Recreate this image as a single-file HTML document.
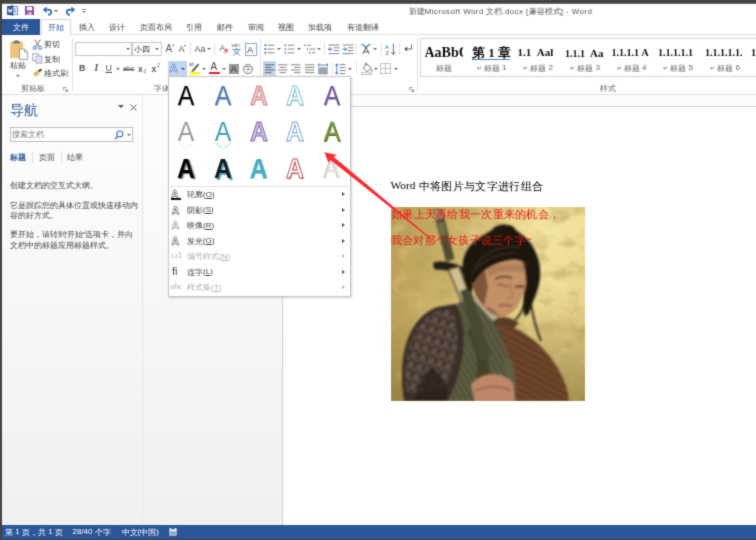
<!DOCTYPE html>
<html lang="zh"><head><meta charset="utf-8"><title>Word</title>
<style>
html,body{margin:0;padding:0}html{overflow:hidden;width:756px;height:540px}
body{width:756px;height:540px;overflow:hidden;position:relative;background:#444;font-family:"Liberation Sans",sans-serif;font-size:8px;color:#444}
#w{position:absolute;left:0;top:0;width:756px;height:540px;overflow:hidden;filter:url(#soft)}
#w div,#w svg,#w b.p,#w i.p{position:absolute}
.t{line-height:1;white-space:nowrap}
.c{display:inline-block;letter-spacing:0;position:relative;top:0.5px;line-height:1;white-space:nowrap;text-align:justify;text-align-last:justify;vertical-align:baseline}
.c1{width:1em}.c2{width:2em}.c3{width:3em}.c4{width:4em}.c5{width:5em}.c6{width:6em}.c7{width:7em}.c8{width:8em}.c9{width:9em}.c10{width:10em}.c11{width:11em}.c12{width:12em}.c13{width:13em}.c14{width:14em}.c15{width:15em}.c16{width:16em}
.se{font-family:"Liberation Serif",serif}
.sep{width:1px;background:#e1e1e1}
.ar{width:0;height:0;border-left:2px solid transparent;border-right:2px solid transparent;border-top:2px solid #666}
.ra{width:0;height:0;border-top:2.5px solid transparent;border-bottom:2.5px solid transparent;border-left:3px solid #555}
.A{font-size:27.5px;line-height:28px;width:36px;text-align:center;font-weight:400}
</style></head><body>
<svg width="0" height="0" style="position:absolute"><filter id="soft" x="0" y="0" width="100%" height="100%" color-interpolation-filters="sRGB"><feConvolveMatrix order="3" kernelMatrix="0.0225 0.105 0.0225 0.105 0.49 0.105 0.0225 0.105 0.0225" divisor="1" edgeMode="duplicate" preserveAlpha="false"/></filter></svg>
<div id="w">
<div style="left:0;top:3px;width:756px;height:1px;background:#3a3a3a"></div><div style="left:2px;top:3px;width:754px;height:1px;background:#6a6a6a"></div>
<div style="left:2px;top:4px;width:754px;height:535px;background:#fff"></div>
<div style="left:0;top:539px;width:756px;height:1px;background:#444"></div>
<!-- title bar / quick access -->
<svg style="left:6px;top:5px" width="13" height="11" viewBox="0 0 13 11">
<rect x="6" y="1.5" width="5.5" height="8" fill="#fff" stroke="#6e8fc2" stroke-width="1"/>
<rect x="7.2" y="3" width="3" height="5" fill="#a9bfe0"/>
<path d="M1 1.3 L7.3 0.2 V10.8 L1 9.7 Z" fill="#2b579a"/>
<path d="M2.3 3.6 L3.1 7.4 L4.1 4.6 L5.1 7.4 L5.9 3.6" fill="none" stroke="#fff" stroke-width="0.9"/>
</svg>
<svg style="left:25px;top:6px" width="9" height="9" viewBox="0 0 9 9">
<rect width="9" height="9" rx="0.6" fill="#9247b0"/>
<rect x="1.8" y="0.8" width="5.4" height="3.6" fill="#fff"/>
<rect x="2.4" y="6.2" width="4.2" height="2.8" fill="#e9d8f0"/>
<rect x="3" y="6.8" width="1.2" height="1.6" fill="#9247b0"/>
</svg>
<svg style="left:41.5px;top:6px" width="11" height="10" viewBox="0 0 11 10"><path d="M0.6 3.8 L4.6 0.6 V7 Z" fill="#3a74b8"/><path d="M4 3.8 H6.4 C10 3.8 10.4 7.4 6.2 9.2" fill="none" stroke="#3a74b8" stroke-width="1.9"/></svg>
<div class="ar" style="left:54px;top:9.5px;border-top-color:#555"></div>
<svg style="left:64.5px;top:6px" width="11" height="10" viewBox="0 0 11 10"><path d="M10.4 3.8 L6.4 0.6 V7 Z" fill="#3a74b8"/><path d="M7 3.8 H4.6 C1 3.8 0.6 7.4 4.8 9.2" fill="none" stroke="#3a74b8" stroke-width="1.9"/></svg>
<div style="left:82px;top:9px;width:4px;height:1px;background:#888"></div>
<div class="ar" style="left:82px;top:11px;border-top-color:#888"></div>
<div class="t" style="left:408.5px;top:7.5px;font-size:8px;color:#555;letter-spacing:0.4px"><span class="c c2">新建</span>Microsoft Word <span class="c c2">文档</span>.docx [<span class="c c4">兼容模式</span>] - Word</div>
<!-- ribbon tabs -->
<div style="left:2px;top:34px;width:754px;height:1px;background:#e1e1e1"></div>
<div style="left:2px;top:19px;width:38px;height:16px;background:#2b579a"></div>
<div class="t" style="left:13px;top:23px;font-size:8px;color:#fff"><span class="c c2">文件</span></div>
<div style="left:41px;top:19px;width:30px;height:16px;background:#fff;border:1px solid #d6d6d6;border-bottom:none;box-sizing:border-box"></div>
<div class="t" style="left:47.5px;top:23px;color:#2b579a"><span class="c c2">开始</span></div>
<div class="t" style="left:79px;top:23px"><span class="c c2">插入</span></div>
<div class="t" style="left:109px;top:23px"><span class="c c2">设计</span></div>
<div class="t" style="left:140px;top:23px"><span class="c c4">页面布局</span></div>
<div class="t" style="left:186px;top:23px"><span class="c c2">引用</span></div>
<div class="t" style="left:217px;top:23px"><span class="c c2">邮件</span></div>
<div class="t" style="left:248px;top:23px"><span class="c c2">审阅</span></div>
<div class="t" style="left:278px;top:23px"><span class="c c2">视图</span></div>
<div class="t" style="left:308px;top:23px"><span class="c c3">加载项</span></div>
<div class="t" style="left:347px;top:23px"><span class="c c4">有道翻译</span></div>
<!-- ribbon: clipboard -->
<div style="left:2px;top:93.5px;width:754px;height:1px;background:#dedede"></div>
<svg style="left:9px;top:40px" width="20" height="22" viewBox="0 0 20 22">
<rect x="1" y="1.8" width="13" height="16.5" rx="0.8" fill="#ecc57a"/>
<rect x="4" y="1" width="7" height="2.4" rx="0.8" fill="#777"/>
<rect x="6" y="0" width="3" height="1.8" rx="0.9" fill="#888"/>
<path d="M10.5 9 H15.5 L18.5 12 V19.5 H10.5 Z" fill="#fff" stroke="#8a8a8a" stroke-width="0.8"/>
<path d="M15.5 9 V12 H18.5" fill="none" stroke="#8a8a8a" stroke-width="0.8"/>
</svg>
<div class="t" style="left:10px;top:61.3px"><span class="c c2">粘贴</span></div>
<div class="ar" style="left:16px;top:75px"></div>
<svg style="left:32px;top:39px" width="11" height="11" viewBox="0 0 11 11">
<path d="M2.6 0.6 L7.2 7.6 M8.4 0.6 L3.8 7.6" stroke="#666" stroke-width="1" fill="none"/>
<circle cx="2.8" cy="8.8" r="1.6" fill="none" stroke="#3a74b8" stroke-width="1"/>
<circle cx="8.2" cy="8.8" r="1.6" fill="none" stroke="#3a74b8" stroke-width="1"/>
</svg>
<div class="t" style="left:44px;top:40.5px"><span class="c c2">剪切</span></div>
<svg style="left:32px;top:53px" width="11" height="11" viewBox="0 0 11 11">
<rect x="0.8" y="0.8" width="5.6" height="7" fill="#fff" stroke="#7f8fa8" stroke-width="0.8"/>
<rect x="4" y="3.2" width="5.8" height="7" fill="#fff" stroke="#7f8fa8" stroke-width="0.8"/>
<path d="M5.2 5.4 H8.6 M5.2 7 H8.6 M5.2 8.6 H8.6" stroke="#9fb3d1" stroke-width="0.7"/>
</svg>
<div class="t" style="left:44px;top:55px"><span class="c c2">复制</span></div>
<svg style="left:32px;top:68px" width="11" height="10" viewBox="0 0 11 10">
<path d="M1 5.6 L5.2 2.6 L7.6 5.4 L3.6 8.8 Z" fill="#e8b65a"/>
<path d="M5.6 2.4 L8.8 0.4 L10.2 2 L7.4 4.6 Z" fill="#555"/>
</svg>
<div class="t" style="left:44px;top:69.3px"><span class="c c3">格式刷</span></div>
<div class="t" style="left:21px;top:84px;color:#666"><span class="c c3">剪贴板</span></div>
<svg style="left:63px;top:86.5px" width="5" height="5" viewBox="0 0 5 5"><path d="M0.5 3.5 V0.5 H3.5" fill="none" stroke="#888" stroke-width="0.8"/><path d="M2 2 L4.5 4.5 M4.5 2.4 V4.5 H2.4" fill="none" stroke="#777" stroke-width="0.8"/></svg>
<div class="sep" style="left:72px;top:38px;height:53px"></div>
<!-- font group row1 -->
<div style="left:75px;top:42px;width:57px;height:14px;border:1px solid #c6c6c6;box-sizing:border-box;background:#fff"></div>
<div class="ar" style="left:126px;top:48px"></div>
<div style="left:131.5px;top:42px;width:30px;height:14px;border:1px solid #c6c6c6;box-sizing:border-box;background:#fff"></div>
<div class="t" style="left:134px;top:45px;color:#333"><span class="c c2">小四</span></div>
<div class="ar" style="left:155px;top:48px"></div>
<div class="t" style="left:165.5px;top:44px;font-size:10px;color:#555">A</div><div class="ar" style="left:171.5px;top:44px;border-top:none;border-bottom:2px solid #3a74b8;border-left-width:1.5px;border-right-width:1.5px"></div>
<div class="t" style="left:178.5px;top:45px;font-size:9px;color:#555">A</div><div class="ar" style="left:184px;top:44.5px;border-top-color:#3a74b8;border-left-width:1.5px;border-right-width:1.5px"></div>
<div class="sep" style="left:189.5px;top:43px;height:12px"></div>
<div class="t" style="left:194.5px;top:44.5px;font-size:9px;color:#555">Aa</div><div class="ar" style="left:206.5px;top:48px"></div>
<div class="sep" style="left:214px;top:43px;height:12px"></div>
<svg style="left:219px;top:43px" width="11" height="12" viewBox="0 0 11 12">
<text x="0.5" y="8" font-family="Liberation Sans" font-size="8.5" fill="#555">A</text>
<path d="M4.2 8.6 L7.4 5 L9.8 7.2 L6.6 10.8 Z" fill="#e8798f"/><path d="M4.2 8.6 L5.4 7.3 L7.8 9.5 L6.6 10.8 Z" fill="#f4b7c2"/>
</svg>
<svg style="left:231px;top:42.5px" width="11" height="13" viewBox="0 0 11 13"><text x="0.4" y="4" font-family="Liberation Sans" font-size="4.6" fill="#666">wén</text><path d="M5.5 4.8 V6.4 M1.4 6.6 H9.6 M3 7.6 L8.6 12.4 M8.2 7.6 L2.4 12.4" stroke="#3a74b8" stroke-width="0.9" fill="none"/></svg>
<div style="left:244.5px;top:43px;width:12px;height:12.5px;border:1px solid #86a8d6;box-sizing:border-box"></div>
<div class="t" style="left:247px;top:44.5px;font-size:9.5px;color:#444">A</div>
<!-- font group row2 -->
<div class="t" style="left:79px;top:64px;font-size:9px;font-weight:700;color:#555">B</div>
<div class="t se" style="left:94.5px;top:64px;font-size:9.5px;font-weight:700;font-style:italic;color:#555">I</div>
<div class="t" style="left:105.5px;top:64px;font-size:9px;color:#555;text-decoration:underline">U</div>
<div class="ar" style="left:116px;top:68px"></div>
<div class="t" style="left:123px;top:65px;font-size:7px;color:#555;text-decoration:line-through">abc</div>
<div class="t" style="left:138px;top:64.5px;font-size:8.5px;font-weight:700;color:#555">x</div><div class="t" style="left:143.5px;top:68.5px;font-size:5px;color:#3a74b8">2</div>
<div class="t" style="left:151.5px;top:64.5px;font-size:8.5px;font-weight:700;color:#555">x</div><div class="t" style="left:157px;top:62.5px;font-size:5px;color:#3a74b8">2</div>
<div style="left:167.5px;top:60.5px;width:19.5px;height:15.5px;background:#c2d5f2"></div>
<div class="t" style="left:169.5px;top:62.5px;font-size:11.5px;font-weight:700;color:#d9e6f8;-webkit-text-stroke:0.55px #3a74b8">A</div>
<div class="ar" style="left:181px;top:67.5px;border-top-color:#444"></div>
<svg style="left:188.5px;top:61px" width="12" height="14" viewBox="0 0 12 14">
<text x="0" y="5" font-family="Liberation Sans" font-size="4.5" fill="#555">ab</text>
<path d="M3 9.2 L8.8 2.4 L10.4 3.8 L4.8 10.4 L2.4 10.8 Z" fill="#666"/>
<rect x="0.5" y="11" width="10.5" height="2.6" fill="#ffff00"/>
</svg>
<div class="ar" style="left:202px;top:67.5px"></div>
<div class="t" style="left:210.5px;top:62px;font-size:10px;color:#444">A</div>
<div style="left:209px;top:71.5px;width:10.5px;height:2.6px;background:#e8202a"></div>
<div class="ar" style="left:221.5px;top:67.5px"></div>
<div style="left:229px;top:63.5px;width:9.5px;height:10.5px;background:#9a9a9a"></div>
<div class="t" style="left:230.5px;top:64px;font-size:9.5px;color:#333">A</div>
<div style="left:243px;top:63.5px;width:10px;height:10px;border:0.8px solid #777;border-radius:50%;box-sizing:border-box"></div>
<div class="t" style="left:245px;top:65.3px;font-size:6px;color:#666"><span class="c c1">字</span></div>
<div class="t" style="left:153.5px;top:84px;color:#666"><span class="c c2">字体</span></div>
<div class="sep" style="left:260px;top:38px;height:53px"></div>
<!-- paragraph group row1 -->
<svg style="left:263.5px;top:43px" width="11" height="12" viewBox="0 0 11 12">
<path d="M3.6 2.2 H10.4 M3.6 6 H10.4 M3.6 9.8 H10.4" stroke="#777" stroke-width="0.9"/>
<rect x="0.4" y="1.3" width="1.8" height="1.8" fill="#3a74b8"/><rect x="0.4" y="5.1" width="1.8" height="1.8" fill="#3a74b8"/><rect x="0.4" y="8.9" width="1.8" height="1.8" fill="#3a74b8"/>
</svg>
<div class="ar" style="left:276.5px;top:48px"></div>
<svg style="left:284px;top:43px" width="11" height="12" viewBox="0 0 11 12">
<path d="M3.6 2.2 H10.4 M3.6 6 H10.4 M3.6 9.8 H10.4" stroke="#777" stroke-width="0.9"/>
<path d="M1.2 1 V3.4 M1.2 4.8 V7.2 M1.2 8.6 V11" stroke="#3a74b8" stroke-width="0.9"/>
</svg>
<div class="ar" style="left:296.5px;top:48px"></div>
<svg style="left:304px;top:43px" width="12" height="12" viewBox="0 0 12 12">
<path d="M3 2.2 H7 M5.6 6 H11.4 M7.6 9.8 H11.4" stroke="#777" stroke-width="0.9"/>
<path d="M0.8 1 V3.4 M3.4 4.8 V7.2 M5.6 8.6 V11" stroke="#3a74b8" stroke-width="0.9"/>
</svg>
<div class="ar" style="left:316.5px;top:48px"></div>
<div class="sep" style="left:324px;top:43px;height:12px"></div>
<svg style="left:327.5px;top:43.5px" width="12" height="11" viewBox="0 0 12 11">
<path d="M0.5 1 H11.5 M6 3.8 H11.5 M6 6.6 H11.5 M0.5 9.6 H11.5" stroke="#777" stroke-width="0.9"/>
<path d="M4.6 5.2 H0.8 M2.4 3.4 L0.6 5.2 L2.4 7" stroke="#3a74b8" stroke-width="1" fill="none"/>
</svg>
<svg style="left:341.5px;top:43.5px" width="12" height="11" viewBox="0 0 12 11">
<path d="M0.5 1 H11.5 M6 3.8 H11.5 M6 6.6 H11.5 M0.5 9.6 H11.5" stroke="#777" stroke-width="0.9"/>
<path d="M0.6 5.2 H4.4 M2.8 3.4 L4.6 5.2 L2.8 7" stroke="#3a74b8" stroke-width="1" fill="none"/>
</svg>
<div class="sep" style="left:356px;top:43px;height:12px"></div>
<svg style="left:360px;top:43px" width="12" height="12" viewBox="0 0 12 12">
<path d="M1 0.8 L6 5 L11 0.8 M3 1 L6 4 L9 1" stroke="#3a74b8" stroke-width="0.9" fill="none"/>
<path d="M2.6 11 L6 4.6 L9.4 11 M3.8 8.8 H8.2" stroke="#555" stroke-width="1" fill="none"/>
</svg>
<div class="ar" style="left:372.5px;top:48px"></div>
<div class="sep" style="left:380.5px;top:43px;height:12px"></div>
<svg style="left:384.5px;top:42.5px" width="12" height="13" viewBox="0 0 12 13">
<text x="0" y="5.6" font-family="Liberation Sans" font-size="6.2" fill="#3a74b8">A</text>
<text x="0.2" y="12.4" font-family="Liberation Sans" font-size="6.2" fill="#8e5bb0">Z</text>
<path d="M8.4 0.6 V11.2 M6.4 9 L8.4 11.6 L10.4 9" stroke="#666" stroke-width="0.9" fill="none"/>
</svg>
<div class="sep" style="left:399px;top:43px;height:12px"></div>
<svg style="left:402.5px;top:44px" width="10" height="9" viewBox="0 0 10 9">
<path d="M8.6 0.6 V5 H2" stroke="#666" stroke-width="1" fill="none"/><path d="M4.2 2.6 L1.2 5 L4.2 7.4 Z" fill="#555"/>
</svg>
<!-- paragraph group row2 -->
<div style="left:262.5px;top:60.5px;width:13px;height:15.5px;background:#c2d5f2"></div>
<svg style="left:264.5px;top:63.5px" width="10" height="10" viewBox="0 0 10 10"><path d="M0 0.8 H9.4 M0 3.4 H6.4 M0 6 H9.4 M0 8.6 H6.4" stroke="#555" stroke-width="0.9"/></svg>
<svg style="left:277.5px;top:63.5px" width="10" height="10" viewBox="0 0 10 10"><path d="M0 0.8 H9.4 M1.6 3.4 H7.8 M0 6 H9.4 M1.6 8.6 H7.8" stroke="#777" stroke-width="0.9"/></svg>
<svg style="left:291px;top:63.5px" width="10" height="10" viewBox="0 0 10 10"><path d="M0 0.8 H9.4 M3 3.4 H9.4 M0 6 H9.4 M3 8.6 H9.4" stroke="#777" stroke-width="0.9"/></svg>
<svg style="left:305px;top:63.5px" width="10" height="10" viewBox="0 0 10 10"><path d="M0 0.8 H9.4 M0 3.4 H9.4 M0 6 H9.4 M0 8.6 H9.4" stroke="#777" stroke-width="0.9"/></svg>
<svg style="left:318px;top:62.5px" width="10" height="12" viewBox="0 0 10 12">
<path d="M0.5 0.6 V3.4 M9.5 0.6 V3.4 M0.5 2 H9.5" stroke="#3a74b8" stroke-width="0.9" fill="none"/>
<rect x="0.4" y="4.4" width="9.2" height="7" fill="#8a93a0"/><path d="M1.4 6 H8.6 M1.4 8 H8.6 M1.4 10 H8.6" stroke="#cfd5de" stroke-width="0.6"/>
</svg>
<div class="sep" style="left:331.5px;top:62px;height:12px"></div>
<svg style="left:335px;top:62.5px" width="11" height="12" viewBox="0 0 11 12">
<path d="M4.6 1.6 H10.6 M4.6 4.6 H10.6 M4.6 7.6 H10.6 M4.6 10.6 H10.6" stroke="#777" stroke-width="0.9"/>
<path d="M1.8 1 V11 M0.4 2.8 L1.8 0.8 L3.2 2.8 M0.4 9.2 L1.8 11.2 L3.2 9.2" stroke="#3a74b8" stroke-width="0.9" fill="none"/>
</svg>
<div class="ar" style="left:348px;top:67.5px"></div>
<div class="sep" style="left:356px;top:62px;height:12px"></div>
<svg style="left:359.5px;top:62px" width="13" height="13" viewBox="0 0 13 13">
<path d="M3.2 5.8 L7 2 L11 6 L7.2 9.8 Z" fill="#fff" stroke="#666" stroke-width="0.9"/>
<path d="M7 2 C5.4 0.4 4.2 1.6 5.4 3.4" fill="none" stroke="#666" stroke-width="0.8"/>
<path d="M11.6 7 C12.6 8.6 12.4 9.6 11.6 9.6 C10.8 9.6 10.6 8.6 11.6 7Z" fill="#666"/>
<rect x="1.4" y="10.8" width="10.4" height="1.8" fill="#fff" stroke="#999" stroke-width="0.6"/>
</svg>
<div class="ar" style="left:373.5px;top:67.5px"></div>
<svg style="left:379.5px;top:62.5px" width="11" height="11" viewBox="0 0 11 11">
<rect x="0.5" y="0.5" width="10" height="10" fill="none" stroke="#bbb" stroke-width="0.9"/><path d="M5.5 0.5 V10.5 M0.5 5.5 H10.5" stroke="#bbb" stroke-width="0.9"/>
</svg>
<div class="ar" style="left:393.5px;top:67.5px"></div>
<svg style="left:409px;top:86.5px" width="5" height="5" viewBox="0 0 5 5"><path d="M0.5 3.5 V0.5 H3.5" fill="none" stroke="#888" stroke-width="0.8"/><path d="M2 2 L4.5 4.5 M4.5 2.4 V4.5 H2.4" fill="none" stroke="#777" stroke-width="0.8"/></svg>
<div class="sep" style="left:417px;top:38px;height:53px"></div>
<!-- styles gallery -->
<div style="left:420px;top:38px;width:340px;height:39px;border:1px solid #d6d6d6;box-sizing:border-box;background:#fff"></div>
<div class="t se" style="left:424.5px;top:46px;font-size:14px;font-weight:700;color:#111;width:38.5px;overflow:hidden">AaBbCc</div>
<div class="t" style="left:436px;top:64px;color:#666"><span class="c c2">标题</span></div>
<div class="t" style="left:471.5px;top:45.5px;font-size:13px;font-weight:700;color:#111;width:38px;border-bottom:1px solid #4f81bd;padding-bottom:0.5px"><span class="c c1">第</span> <span class="se">1</span> <span class="c c1">章</span></div>
<div class="t" style="left:476.5px;top:64px;color:#666"><span style="font-size:6px">↵</span> <span class="c c2">标题</span> 1</div>
<div class="t se" style="left:517.5px;top:47px;font-size:11px;font-weight:700;color:#111;width:39px;overflow:hidden">1.1&nbsp;&nbsp;<span style="font-size:11px">Aal</span></div>
<div class="t" style="left:523px;top:64px;color:#666"><span style="font-size:6px">↵</span> <span class="c c2">标题</span> 2</div>
<div class="t se" style="left:565px;top:48px;font-size:10px;font-weight:700;color:#111">1.1.1&nbsp;&nbsp;<span style="font-size:11px">Aa</span></div>
<div class="t" style="left:570px;top:64px;color:#666"><span style="font-size:6px">↵</span> <span class="c c2">标题</span> 3</div>
<div class="t se" style="left:611.5px;top:48px;font-size:10px;font-weight:700;color:#111">1.1.1.1&nbsp;<span style="font-size:10px">A</span></div>
<div class="t" style="left:616.5px;top:64px;color:#666"><span style="font-size:6px">↵</span> <span class="c c2">标题</span> 4</div>
<div class="t se" style="left:658px;top:48px;font-size:10px;font-weight:700;color:#111">1.1.1.1.1</div>
<div class="t" style="left:663px;top:64px;color:#666"><span style="font-size:6px">↵</span> <span class="c c2">标题</span> 5</div>
<div class="t se" style="left:705px;top:48px;font-size:10px;font-weight:700;color:#111">1.1.1.1.1.</div>
<div class="t" style="left:710px;top:64px;color:#666"><span style="font-size:6px">↵</span> <span class="c c2">标题</span> 6</div>
<div class="t se" style="left:751px;top:48px;font-size:10px;font-weight:700;color:#111">1.</div>
<div class="t" style="left:599.5px;top:84px;color:#666"><span class="c c2">样式</span></div>
<!-- workspace + nav pane background -->
<div style="left:2px;top:94.5px;width:754px;height:431px;background:linear-gradient(#fdfdfd,#f0f0f0)"></div>
<div style="left:142px;top:95px;width:1px;height:430px;background:#e6e6e6"></div>
<!-- page -->
<div style="left:282px;top:106px;width:476px;height:420px;background:#fff;border:1px solid #d2d2d2;box-sizing:border-box"></div>
<!-- navigation pane -->
<div class="t" style="left:10px;top:102.5px;font-size:14px;color:#2b579a"><span class="c c2">导航</span></div>
<div class="ar" style="left:118px;top:105px;border-left-width:3px;border-right-width:3px;border-top:3.5px solid #555"></div>
<svg style="left:130px;top:103.5px" width="7" height="7" viewBox="0 0 7 7"><path d="M0.6 0.6 L6.4 6.4 M6.4 0.6 L0.6 6.4" stroke="#555" stroke-width="1"/></svg>
<div style="left:9.5px;top:127px;width:123px;height:15px;border:1px solid #bdbdbd;box-sizing:border-box;background:#fff"></div>
<div class="t" style="left:11.5px;top:130.5px;color:#777"><span class="c c4">搜索文档</span></div>
<svg style="left:113.5px;top:129.5px" width="10" height="10" viewBox="0 0 10 10"><circle cx="5.8" cy="4" r="3" fill="none" stroke="#3a74b8" stroke-width="1.1"/><path d="M3.8 6.2 L0.8 9.2" stroke="#3a74b8" stroke-width="1.3"/></svg>
<div class="ar" style="left:126.5px;top:134px"></div>
<div class="t" style="left:10px;top:153px;color:#2b579a;font-weight:700"><span class="c c2">标题</span></div>
<div class="sep" style="left:31.5px;top:151px;height:12px"></div>
<div class="t" style="left:38.5px;top:153px"><span class="c c2">页面</span></div>
<div class="sep" style="left:60.5px;top:151px;height:12px"></div>
<div class="t" style="left:66.5px;top:153px"><span class="c c2">结果</span></div>
<div class="t" style="left:10px;top:181px;font-size:7.8px"><span class="c c11">创建文档的交互式大纲。</span></div>
<div class="t" style="left:10px;top:201px;font-size:7.8px"><span class="c c16">它是跟踪您的具体位置或快速移动内</span></div>
<div class="t" style="left:10px;top:211.3px;font-size:7.8px"><span class="c c6">容的好方式。</span></div>
<div class="t" style="left:10px;top:230.8px;font-size:7.8px"><span class="c c7">要开始，请转到</span>“<span class="c c2">开始</span>”<span class="c c6">选项卡，并向</span></div>
<div class="t" style="left:10px;top:241.1px;font-size:7.8px"><span class="c c13">文档中的标题应用标题样式。</span></div>
<!-- document text -->
<div class="t" style="left:390.5px;top:180px;font-size:11px;color:#000"><span class="se" style="font-size:11.4px">Word</span> <span class="c" style="width:124.5px">中将图片与文字进行组合</span></div>
<!--PHOTO-->
<svg style="left:390.5px;top:207px" width="194" height="194" viewBox="0 0 194 194">
<defs>
<linearGradient id="bg" x1="0" y1="0" x2="1" y2="0.3"><stop offset="0" stop-color="#b89c50"/><stop offset="0.4" stop-color="#cfb66e"/><stop offset="0.75" stop-color="#ead68c"/><stop offset="1" stop-color="#e6d088"/></linearGradient>
<linearGradient id="dk" x1="0" y1="0" x2="0" y2="1"><stop offset="0.5" stop-color="#6e5a22" stop-opacity="0"/><stop offset="1" stop-color="#6e5a22" stop-opacity="0.55"/></linearGradient>
<radialGradient id="hl" cx="0.86" cy="0.12" r="0.5"><stop offset="0" stop-color="#f6e7a4" stop-opacity="0.8"/><stop offset="1" stop-color="#f6e7a4" stop-opacity="0"/></radialGradient>
<filter id="bl" x="-10%" y="-10%" width="120%" height="120%"><feGaussianBlur stdDeviation="0.9"/></filter>
<filter id="bl2" x="-10%" y="-10%" width="120%" height="120%"><feGaussianBlur stdDeviation="3"/></filter>
<filter id="nz" x="0" y="0" width="100%" height="100%"><feTurbulence type="fractalNoise" baseFrequency="0.045 0.07" numOctaves="3" seed="7"/><feColorMatrix type="matrix" values="0 0 0 0 0.42  0 0 0 0 0.33  0 0 0 0 0.1  0 0 0 -2.4 1.35"/></filter>
<filter id="nz2" x="0" y="0" width="100%" height="100%"><feTurbulence type="fractalNoise" baseFrequency="0.05 0.06" numOctaves="2" seed="3"/><feColorMatrix type="matrix" values="0 0 0 0 1  0 0 0 0 0.95  0 0 0 0 0.7  0 0 0 2.2 -1.25"/></filter>
<pattern id="sc" width="9" height="10" patternUnits="userSpaceOnUse" patternTransform="rotate(18)"><ellipse cx="4.5" cy="4" rx="3" ry="3.8" fill="#7a695c"/><ellipse cx="0" cy="9" rx="3" ry="3.8" fill="#66574b"/><ellipse cx="9" cy="9" rx="3" ry="3.8" fill="#66574b"/></pattern>
<pattern id="st" width="5" height="40" patternUnits="userSpaceOnUse" patternTransform="rotate(-28)"><rect width="2" height="40" fill="#3e3d28"/></pattern>
<pattern id="st2" width="6" height="40" patternUnits="userSpaceOnUse" patternTransform="rotate(-62)"><rect width="2.2" height="40" fill="#4e2c1a"/></pattern>
<clipPath id="cp"><rect width="194" height="194"/></clipPath>
</defs>
<g clip-path="url(#cp)">
<rect width="194" height="194" fill="url(#bg)"/>
<rect width="194" height="194" fill="url(#hl)"/>
<rect width="194" height="194" fill="url(#dk)"/>
<rect width="194" height="194" filter="url(#nz)" opacity="0.55"/>
<rect width="194" height="194" filter="url(#nz2)" opacity="0.35"/>
<g filter="url(#bl)">
<!-- sword -->
<path d="M42.5 4.5 C43 0.5 51 0 51.5 4 L63.5 52 L55 55 Z" fill="#4f4c30"/>
<path d="M43.5 4 C44 1.5 50 1 50.5 4 L52 11 L45 12.5 Z" fill="#9a946c"/>
<path d="M47 16 L52 15 L55 28 L50 29 Z" fill="#77734e"/>
<path d="M42 56 C52 52 66 57 76 62 L73.5 67 C64 64 52 63 43 62 Z" fill="#231f16"/>
<path d="M56.5 62 L69 59 L84 99 L73 103 Z" fill="#4a4330"/>
<path d="M58.5 63 L67.5 60.5 L81 98 L74 101 Z" fill="#d2bf94"/>
<!-- torso -->
<path d="M62 98 L84 90 L112 120 L124 194 L52 194 C72 160 74 128 62 98 Z" fill="#5f5e42"/>
<path d="M62 98 L84 90 L112 120 L124 194 L52 194 C72 160 74 128 62 98 Z" fill="url(#st)" opacity="0.55"/>
<path d="M80 120 C92 130 100 150 98 175 L84 180 C88 160 86 140 76 126 Z" fill="#45432c"/>
<path d="M69 84 L79 80 L100 148 L90 154 Z" fill="#4a4830"/>
<!-- armor shoulder -->
<path d="M13 194 C6 150 16 112 46 100 L64 97 C80 120 72 168 56 194 Z" fill="#3a2e25"/>
<path d="M16 186 C10 150 20 116 46 104 L60 102 C72 122 66 160 52 184 Z" fill="url(#sc)" opacity="0.62"/>
<path d="M40 160 C52 168 58 180 56 194 L24 194 C26 180 32 168 40 160 Z" fill="#2a2119" opacity="0.8"/>
<!-- right arm -->
<path d="M104 116 C120 116 140 128 154 144 C167 158 177 178 178 194 L114 194 C124 170 118 140 104 116 Z" fill="#70462b"/>
<path d="M104 116 C120 116 140 128 154 144 C167 158 177 178 178 194 L114 194 C124 170 118 140 104 116 Z" fill="url(#st2)" opacity="0.5"/>
<path d="M104 112 C112 108 120 110 128 116 L122 122 C116 118 110 116 104 118 Z" fill="#5a3a26"/>
<path d="M112 150 C116 164 116 180 112 194 L124 194 C126 178 124 164 120 152 Z" fill="#5d6044"/>
<!-- neck / collar -->
<path d="M82 92 L102 114 L112 104 L96 84 Z" fill="#b9b094"/>
<path d="M88 84 L108 110 L118 104 L100 84 Z" fill="#8e6446"/>
<!-- hair back -->
<path d="M100.6 23.5 C104 16 122 15 125 23.5 C132 28 140 34 144 44 C150 56 151 70 146 84 C143 94 138 104 134 110 C130 100 134 80 134 60 L122 52 L107 57 L94 64 L83 76 L80 86 C74 80 71 66 72 54 C74 44 80 36 87 32 C92 28 96 26 100.6 23.5 Z" fill="#1b1510"/>
<!-- face -->
<path d="M81 75 C84 70 90 65 94 63.5 C100 58 112 54 123 52.5 L134 55 C136 64 136 74 134 82 C131 92 127 100 122.5 104 C118 108 113 110.5 109 110 C101 108 93 102 89.5 97 C85 90 82 82 81 75 Z" fill="#c39166"/>
<path d="M81 75 C84 70 90 65 94 63.5 L97 80 L93 99 C86 92 82 84 81 75 Z" fill="#7e553a"/><path d="M93 99 C100 100 106 104 109 110 C101 108 96 104 93 99 Z" fill="#9a6a4a"/><path d="M96 62 C106 58 118 56 132 58 L133 66 C120 62 108 64 98 70 Z" fill="#a87a56" opacity="0.8"/>
<path d="M104 72 C110 69 116 69 121 71 M124 80 C128 79 131 79 133 80" stroke="#3a2418" stroke-width="1.8" fill="none"/>
<path d="M106 78 C110 77 114 78 117 80" stroke="#5a3826" stroke-width="1.2" fill="none"/>
<path d="M119 76 L122 90 L116 92" stroke="#a87452" stroke-width="1.4" fill="none"/>
<path d="M108 99 C112 97.5 117 98 121 99" stroke="#9a5848" stroke-width="2" fill="none"/>
<path d="M84 60 C92 46 108 38 128 40 M80 68 C90 54 104 46 124 46" stroke="#4a3826" stroke-width="1.6" fill="none" opacity="0.7"/>
<!-- hair front strands -->
<path d="M83 76 C88 66 98 58 110 55 C118 53 128 52 134 55 C124 50 108 50 96 56 C88 60 82 68 80 76 Z" fill="#1b1510"/>
<path d="M132 54 C137 66 137 84 133 98 C131 104 128 110 124 113 M138 50 C146 70 142 96 136 108 M140 96 C142 112 146 124 150 134" stroke="#1f1812" stroke-width="1.8" fill="none"/>
<!-- hands -->
<path d="M80 178 C90 164 112 164 122 176 L124 194 L84 194 Z" fill="#bd8768"/>
<path d="M84 184 C96 178 110 178 120 184" stroke="#8d5a44" stroke-width="1.5" fill="none"/>
</g>
</g>
</svg>
<div class="t" style="left:391px;top:208px;font-size:11px;color:#f01818"><span class="c" style="width:169px">如果上天再给我一次重来的机会，</span></div>
<div class="t" style="left:391px;top:234.3px;font-size:11px;color:#f01818"><span class="c" style="width:134.5px">我会对那个女孩子说三个字</span>~</div>
<!-- text effects dropdown -->
<div style="left:167.5px;top:76px;width:183.5px;height:220.5px;background:#fff;border:1px solid #c6c6c6;box-sizing:border-box;box-shadow:1px 1px 2px rgba(0,0,0,0.18)"></div>
<div class="A" style="left:168px;top:82.3px;transform:scaleX(0.9);color:#000;text-shadow:0.5px 0.8px 1px #999">A</div>
<div class="A" style="left:204.5px;top:82.3px;transform:scaleX(0.9);color:#4a7ebb;text-shadow:0.5px 1px 1px #aab">A</div>
<div class="A" style="left:240.5px;top:82.3px;transform:scaleX(0.9);font-weight:700;color:#efc1c1;-webkit-text-stroke:0.9px #cf8a8a">A</div>
<div class="A" style="left:277px;top:82.3px;transform:scaleX(0.9);font-weight:700;color:#fff;-webkit-text-stroke:0.9px #86c5d3;text-shadow:0.8px 1px 1.2px #9bb">A</div>
<div class="A" style="left:313.5px;top:82.3px;transform:scaleX(0.9);color:#7058a3;text-shadow:0.5px 1px 1px #aaa">A</div>
<div class="A" style="left:168px;top:118.3px;transform:scaleX(0.9);color:#9a9a9a">A</div>
<div class="A" style="left:204.5px;top:118.3px;transform:scaleX(0.9);color:#3f9fb8">A</div>
<div class="A" style="left:240.5px;top:118.3px;transform:scaleX(0.9);font-weight:700;color:#cbbde2;-webkit-text-stroke:0.9px #7e62a8">A</div>
<div class="A" style="left:277px;top:118.3px;transform:scaleX(0.9);font-weight:700;color:#fff;-webkit-text-stroke:0.9px #6f9fd6">A</div>
<div class="A" style="left:313.5px;top:118.3px;transform:scaleX(0.9);color:#77933c;-webkit-text-stroke:0.5px #77933c;text-shadow:0.8px 0.8px 0 #4f6228">A</div>
<div class="A" style="left:168px;top:155.3px;transform:scaleX(0.9);color:#000;font-weight:700;text-shadow:1.5px 1px 1.5px #666">A</div>
<div class="A" style="left:204.5px;top:155.3px;transform:scaleX(0.9);color:#1a1a1a;font-weight:700;text-shadow:2px 1.5px 0 #4bacc6">A</div>
<div class="A" style="left:240.5px;top:155.3px;transform:scaleX(0.9);color:#4bacc6;font-weight:700;text-shadow:-1px 1px 1px #8cd">A</div>
<div class="A" style="left:277px;top:155.3px;transform:scaleX(0.9);font-weight:700;color:#fff;-webkit-text-stroke:0.9px #c0504d;text-shadow:0.8px 1px 1px #b88">A</div>
<div class="A" style="left:313.5px;top:155.3px;transform:scaleX(0.9);color:#e6e4d7;-webkit-text-stroke:0.4px #e6e4d7;text-shadow:-0.8px 0.3px 0.4px #999">A</div>
<div class="A" style="left:168px;top:132.1px;transform:scale(0.9,-0.35);color:#9a9a9a;opacity:.14">A</div>
<div class="A" style="left:204.5px;top:132.1px;transform:scale(0.9,-0.35);color:#3f9fb8;opacity:.3">A</div>
<div style="left:169px;top:185.5px;width:180px;height:1px;background:#e1e1e1"></div>
<!-- dropdown menu items -->
<div class="t" style="left:171px;top:188.5px;font-size:10.5px;font-weight:700;color:#fff;-webkit-text-stroke:0.5px #333">A</div>
<div style="left:170.5px;top:198px;width:10px;height:1.6px;background:#111"></div>
<div class="t" style="left:187px;top:190.5px;color:#444"><span class="c c2">轮廓</span>(<u>O</u>)</div>
<div class="ra" style="left:341.5px;top:192px"></div>
<div class="t" style="left:171.5px;top:204.5px;font-size:10.5px;font-weight:700;color:#fff;-webkit-text-stroke:0.5px #555;text-shadow:0.8px 0.8px 1px #aaa">A</div>
<div class="t" style="left:187px;top:206px;color:#444"><span class="c c2">阴影</span>(<u>S</u>)</div>
<div class="ra" style="left:341.5px;top:207.5px"></div>
<div class="t" style="left:171.5px;top:219.5px;font-size:10.5px;font-weight:700;color:#fff;-webkit-text-stroke:0.5px #777">A</div>
<div class="t" style="left:187px;top:221.5px;color:#444"><span class="c c2">映像</span>(<u>R</u>)</div>
<div class="ra" style="left:341.5px;top:223px"></div>
<div class="t" style="left:171.5px;top:235.5px;font-size:10.5px;font-weight:700;color:#fff;-webkit-text-stroke:0.5px #555;text-shadow:0 0 2px #aaa">A</div>
<div class="t" style="left:187px;top:237px;color:#444"><span class="c c2">发光</span>(<u>G</u>)</div>
<div class="ra" style="left:341.5px;top:238.5px"></div>
<div class="t se" style="left:171px;top:252px;font-size:6.5px;color:#aaa">12<span style="font-size:8px">3</span></div>
<div class="t" style="left:187px;top:252.5px;color:#b0b0b0"><span class="c c4">编号样式</span>(<u>N</u>)</div>
<div class="ra" style="left:341.5px;top:254px;border-left-color:#bbb"></div>
<div class="t" style="left:172px;top:266px;font-size:11px;color:#444">fi</div>
<div class="t" style="left:187px;top:268px;color:#444"><span class="c c2">连字</span>(<u>L</u>)</div>
<div class="ra" style="left:341.5px;top:269.5px"></div>
<div class="t se" style="left:170.5px;top:283px;font-size:8px;font-style:italic;color:#aaa">abc</div>
<div class="t" style="left:187px;top:283.5px;color:#b0b0b0"><span class="c c3">样式集</span>(<u>T</u>)</div>
<div class="ra" style="left:341.5px;top:285px;border-left-color:#bbb"></div>
<!-- red annotation arrow -->
<svg style="left:318px;top:146px" width="120" height="100" viewBox="318 146 120 100">
<path d="M324.4 152.2 L337 155 L333.6 156.8 L430.2 237.6 L429.6 238.4 L330.8 160.2 L328.3 162.5 Z" fill="#fb2c34"/>
</svg>
<!-- status bar -->
<div style="left:2px;top:525px;width:754px;height:14px;background:#2b579a"></div>
<div class="t" style="left:5px;top:528px;color:#fff"><span class="c c1">第</span> 1 <span class="c c2">页，</span><span class="c c1">共</span> 1 <span class="c c1">页</span></div>
<div class="t" style="left:72.5px;top:528px;color:#fff">28/40 <span class="c c2">个字</span></div>
<div class="t" style="left:121.5px;top:528px;color:#fff"><span class="c c2">中文</span>(<span class="c c2">中国</span>)</div>
<svg style="left:168.5px;top:527.5px" width="8" height="8" viewBox="0 0 8 8"><rect x="0.5" y="1.5" width="7" height="6" fill="#fff"/><rect x="1.2" y="3.2" width="5.6" height="3.6" fill="#2b579a" opacity="0.55"/><rect x="0.5" y="0.2" width="2" height="1.6" fill="#fff"/><rect x="5.5" y="0.2" width="2" height="1.6" fill="#fff"/></svg>
</div>
</body></html>
